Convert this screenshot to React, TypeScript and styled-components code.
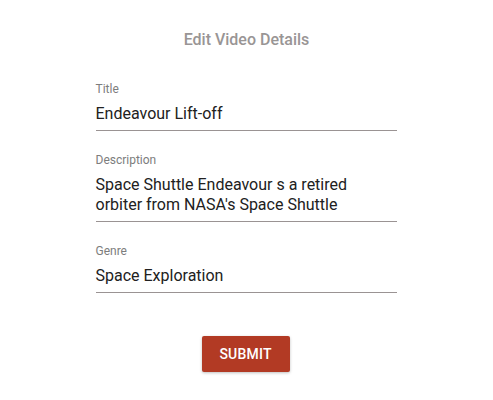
import React, { useState } from "react";
import styled, { createGlobalStyle } from "styled-components";

const GlobalStyle = createGlobalStyle`
	html, body {
		margin: 0;
		padding: 0;
		background: #ffffff;
		font-family: "Roboto", "Liberation Sans", sans-serif;
	}
`;

const Page = styled.div`
	width: 493px;
	height: 400px;
	display: flex;
	flex-direction: column;
	align-items: center;
	padding-top: 30px;
	box-sizing: border-box;
`;

const Heading = styled.h2`
	margin: 0;
	font-size: 16px;
	line-height: 20px;
	font-weight: 500;
	color: #999595;
`;

const Form = styled.form`
	width: 301px;
	margin-top: 32px;
	margin-left: -1px;
	display: flex;
	flex-direction: column;
	gap: 22px;
`;

const Field = styled.div`
	display: flex;
	flex-direction: column;
	border-bottom: 1px solid #9a9393;
	padding-bottom: 6px;
`;

const Label = styled.label`
	font-size: 12px;
	line-height: 14px;
	color: #7d7d7d;
	margin-bottom: 8px;
`;

const Value = styled.div`
	font-size: 16px;
	line-height: 20px;
	color: #212121;
	white-space: pre-line;
`;

const Actions = styled.div`
	display: flex;
	justify-content: center;
	margin-top: 43px;
	margin-left: -2px;
`;

const SubmitButton = styled.button`
	width: 88px;
	height: 36px;
	border: none;
	border-radius: 2px;
	background: #b23a24;
	color: #ffffff;
	font-family: "Roboto", "Liberation Sans", sans-serif;
	font-size: 14px;
	font-weight: 500;
	letter-spacing: 0.2px;
	box-shadow: 0 1px 3px rgba(0, 0, 0, 0.25);
	cursor: pointer;
`;

const fields = [
	{ label: "Title", value: "Endeavour Lift-off" },
	{
		label: "Description",
		value: "Space Shuttle Endeavour s a retired\norbiter from NASA's Space Shuttle",
	},
	{ label: "Genre", value: "Space Exploration" },
];

export default function App() {
	const [data] = useState(fields);

	return (
		<>
			<GlobalStyle />
			<Page>
				<Heading>Edit Video Details</Heading>
				<Form onSubmit={e => e.preventDefault()}>
					{data.map(f => (
						<Field key={f.label}>
							<Label>{f.label}</Label>
							<Value>{f.value}</Value>
						</Field>
					))}
				</Form>
				<Actions>
					<SubmitButton type="button">SUBMIT</SubmitButton>
				</Actions>
			</Page>
		</>
	);
}
